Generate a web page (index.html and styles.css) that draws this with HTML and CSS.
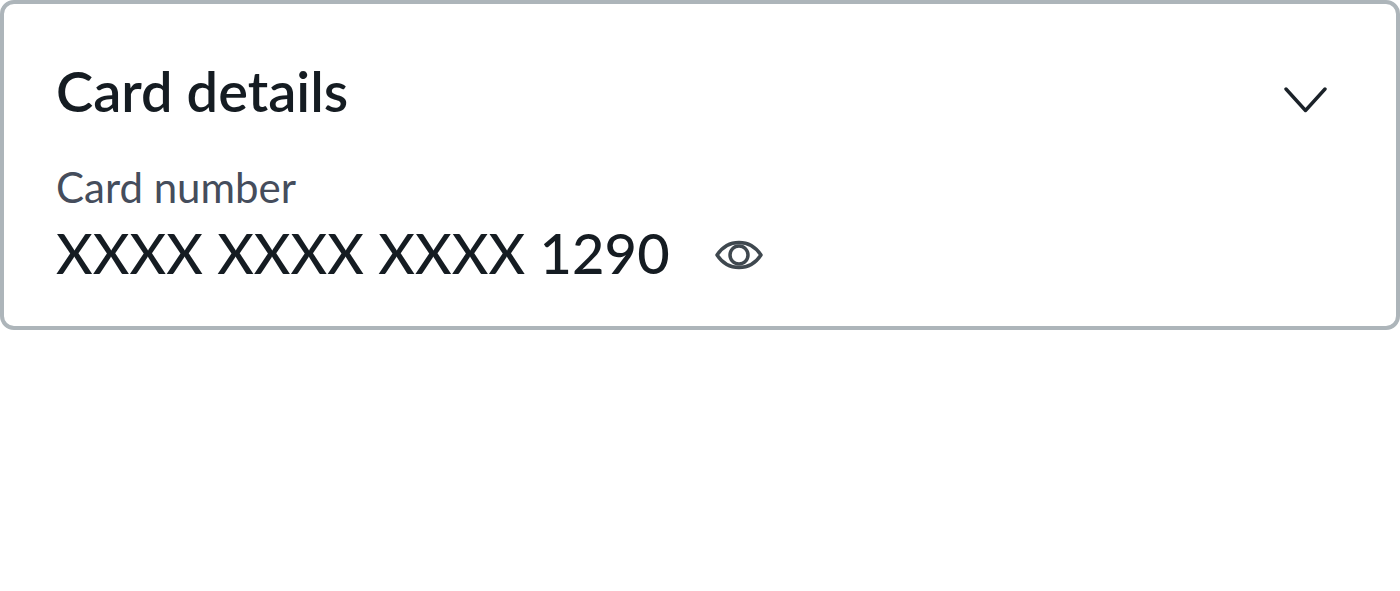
FILE: index.html
```html
<!DOCTYPE html>
<html lang="en">
<head>
    <meta charset="UTF-8">
    <title>Card details</title>
    <link rel="stylesheet" href="styles.css">
</head>
<body>

<div class="card-panel">
    <div class="card-header">
        <h2 class="card-title">Card details</h2>
        <svg class="card-chevron" width="44" height="28" viewBox="0 0 44 28" fill="none">
            <path d="M3 3L22.5 24.5L42 3" stroke="#1b2229" stroke-width="3.4" stroke-linecap="round" stroke-linejoin="round"/>
        </svg>
    </div>
    <div class="card-label">Card number</div>
    <div class="card-number-row">
        <span class="card-number">XXXX XXXX XXXX 1290</span>
        <svg class="card-eye" width="50" height="30" viewBox="0 0 50 30" fill="none">
            <path d="M3 15C9 6 16 2.5 25 2.5C34 2.5 41 6 47 15C41 24 34 27.5 25 27.5C16 27.5 9 24 3 15Z" stroke="#3f484f" stroke-width="3.5" stroke-linejoin="round"/>
            <circle cx="25" cy="15" r="9" stroke="#3f484f" stroke-width="3.5"/>
        </svg>
    </div>
</div>

</body>
</html>
```

FILE: styles.css
```css
body {
    margin: 0;
    background-color: #fff;
    font-family: Lato, "Liberation Sans", sans-serif;
}

.card-panel {
    box-sizing: border-box;
    height: 330px;
    padding: 55px 76px 0 52px;
    border: 4px solid #adb5ba;
    border-radius: 14px;
}

.card-header {
    display: flex;
    justify-content: space-between;
    align-items: center;
    height: 64px;
}

.card-title {
    margin: 0;
    font-size: 56px;
    font-weight: 600;
    line-height: 64px;
    color: #151c22;
}

.card-chevron {
    margin-top: 17px;
    margin-right: -7px;
}

.card-label {
    margin-top: 38px;
    font-size: 42px;
    line-height: 52px;
    color: #454d5c;
}

.card-number-row {
    display: flex;
    align-items: center;
    gap: 44px;
    margin-top: 5px;
}

.card-number {
    font-size: 56px;
    font-weight: 500;
    line-height: 70px;
    letter-spacing: 0.1px;
    color: #151c22;
}

.card-eye {
    margin-top: 4px;
}
```
